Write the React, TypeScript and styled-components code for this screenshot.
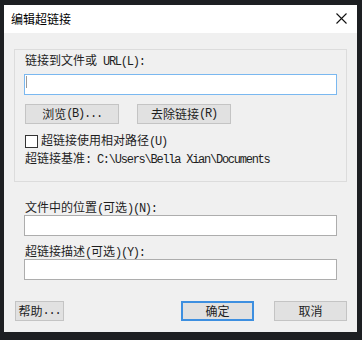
import React from "react";
import styled, { createGlobalStyle } from "styled-components";

const GlobalStyle = createGlobalStyle`
  html, body { margin: 0; padding: 0; background: #1d1f22; }
  body { font-family: "Noto Sans CJK SC", "Liberation Sans", sans-serif; }
`;

const Dialog = styled.div`
  width: 353px;
  height: 327px;
  margin: 5px 0 0 4px;
  background: #f0f0f0;
  display: flex;
  flex-direction: column;
  box-sizing: border-box;
`;

const TitleBar = styled.div`
  height: 28px;
  flex: none;
  background: #ffffff;
  display: flex;
  align-items: center;
  justify-content: space-between;
  padding: 0 10px 0 7px;
`;

const Title = styled.div`
  font-family: "Noto Sans CJK SC", sans-serif;
  font-size: 12px;
  line-height: 16px;
  color: #000;
  margin-top: -1px;
`;

const CloseIcon = styled.svg`
  width: 11px;
  height: 11px;
  display: block;
  margin-top: -2px;
`;

const Body = styled.div`
  display: flex;
  flex-direction: column;
  padding: 16px 10px 10px 10px;
`;

const GroupBox = styled.div`
  border: 1px solid #dcdcdc;
  padding: 2px 9px 15px 9px;
  display: flex;
  flex-direction: column;
`;

const Label = styled.div<{ $indent?: number; $top?: number }>`
  font-size: 12px;
  line-height: 16px;
  height: 16px;
  color: #1e1e1e;
  white-space: nowrap;
  margin-left: ${(p) => p.$indent ?? 1}px;
  margin-top: ${(p) => p.$top ?? 0}px;
`;

const Latin = styled.span`
  font-family: "Liberation Mono", monospace;
  font-size: 12px;
  letter-spacing: -1.25px;
`;

const TextField = styled.div<{ $focused?: boolean; $inset?: number; $top?: number }>`
  height: 21px;
  box-sizing: border-box;
  background: #ffffff;
  border: 1px solid ${(p) => (p.$focused ? "#7ab8f0" : "#adadad")};
  margin: ${(p) => p.$top ?? 0}px ${(p) => p.$inset ?? 0}px 0 ${(p) => p.$inset ?? 0}px;
  position: relative;
`;

const Caret = styled.div`
  position: absolute;
  left: 1px;
  top: 1px;
  width: 1px;
  height: 12px;
  background: #9a9a9a;
`;

const ButtonRow = styled.div<{ $gap: number; $top: number; $indent: number }>`
  display: flex;
  gap: ${(p) => p.$gap}px;
  margin-top: ${(p) => p.$top}px;
  margin-left: ${(p) => p.$indent}px;
`;

const Footer = styled.div`
  display: flex;
  align-items: center;
  margin-top: 21px;
  margin-left: 1px;
`;

const Spacer = styled.div`
  flex: 1;
`;

const Button = styled.div<{ $width: number; $primary?: boolean; $gapRight?: number }>`
  width: ${(p) => p.$width}px;
  height: 20px;
  box-sizing: border-box;
  background: #e1e1e1;
  border: ${(p) => (p.$primary ? "2px solid #3d8fe0" : "1px solid #c4c4c4")};
  display: flex;
  align-items: center;
  justify-content: center;
  font-size: 12px;
  line-height: 16px;
  color: #1e1e1e;
  margin-right: ${(p) => p.$gapRight ?? 0}px;
  white-space: nowrap;
`;

const CheckRow = styled.div`
  display: flex;
  align-items: center;
  margin-top: 9px;
  margin-left: 1px;
  height: 16px;
  gap: 3px;
`;

const CheckBox = styled.div`
  width: 13px;
  height: 13px;
  box-sizing: border-box;
  border: 1px solid #333333;
  background: #ffffff;
`;

const CheckText = styled.div`
  font-size: 12px;
  line-height: 16px;
  color: #1e1e1e;
  white-space: nowrap;
`;

function T({ text }: { text: string }) {
  const parts = text.split(/([\x20-\x7e]+)/).filter((s) => s.length > 0);
  return (
    <>
      {parts.map((s, i) =>
        /^[\x20-\x7e]+$/.test(s) ? <Latin key={i}>{s}</Latin> : <React.Fragment key={i}>{s}</React.Fragment>
      )}
    </>
  );
}

export default function App() {
  return (
    <>
      <GlobalStyle />
      <Dialog>
        <TitleBar>
          <Title>编辑超链接</Title>
          <CloseIcon viewBox="0 0 11 11">
            <path d="M0.5 0.5 L10.5 10.5 M10.5 0.5 L0.5 10.5" stroke="#111" strokeWidth="1.1" fill="none" />
          </CloseIcon>
        </TitleBar>
        <Body>
          <GroupBox>
            <Label>
              <T text="链接到文件或 URL(L):" />
            </Label>
            <TextField $focused $top={6}>
              <Caret />
            </TextField>
            <ButtonRow $gap={18} $top={9} $indent={1}>
              <Button $width={94}>
                <T text="浏览(B)..." />
              </Button>
              <Button $width={94}>
                <T text="去除链接(R)" />
              </Button>
            </ButtonRow>
            <CheckRow>
              <CheckBox />
              <CheckText>
                <T text="超链接使用相对路径(U)" />
              </CheckText>
            </CheckRow>
            <Label $top={1}>
              <T text="超链接基准: C:\Users\Bella Xian\Documents" />
            </Label>
          </GroupBox>
          <Label $indent={11} $top={17}>
            <T text="文件中的位置(可选)(N):" />
          </Label>
          <TextField $inset={10} />
          <Label $indent={11} $top={7}>
            <T text="超链接描述(可选)(Y):" />
          </Label>
          <TextField $inset={10} />
          <Footer>
            <Button $width={49}>
              <T text="帮助..." />
            </Button>
            <Spacer />
            <Button $width={73} $primary $gapRight={20}>
              确定
            </Button>
            <Button $width={73}>取消</Button>
          </Footer>
        </Body>
      </Dialog>
    </>
  );
}
